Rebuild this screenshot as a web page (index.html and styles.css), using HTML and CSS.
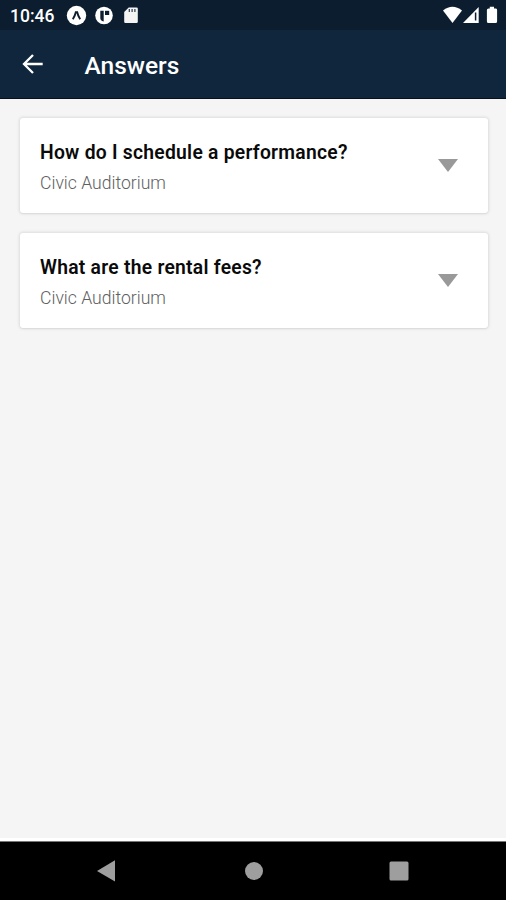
FILE: index.html
```html
<!DOCTYPE html>
<html lang="en">
<head>
<meta charset="utf-8">
<title>Answers</title>
<link rel="stylesheet" href="styles.css">
</head>
<body>
<div class="screen">
  <div class="status">
    <span class="time">10:46</span>
    <svg class="status-apps" width="66" height="30" viewBox="72 0 66 30">
      <circle cx="76.5" cy="15.5" r="9.7" fill="#fff"/>
      <path d="M72.8 19.2Q75 16 75.8 12.3h1.4Q78 16 80.2 19.2" fill="none" stroke="#0b1d2f" stroke-width="1.9"/>
      <circle cx="104" cy="15.5" r="8.8" fill="#fff"/>
      <path d="M100.3 10.8h3.4v10.6q-3.4-.8-3.4-3.5z" fill="#0b1d2f"/>
      <path d="M105 10.8h4.2v4.2H105z" fill="#0b1d2f"/>
      <path d="M128.7 7.5h7.8q1.3 0 1.3 1.3v13q0 1.3-1.3 1.3h-11q-1.3 0-1.3-1.3v-9.8z" fill="#f4f4f4"/>
      <path d="M129.3 9v3M132.1 9v3M134.9 9v3" stroke="#26384a" stroke-width="1.2"/>
    </svg>
    <svg class="status-system" width="58" height="30" viewBox="442 0 58 30">
      <path d="M443 10.5q9.5-7.5 19 0L452.5 23z" fill="#fff"/>
      <path d="M463 23 478.7 7v16z" fill="#fff"/>
      <path d="M475.6 12.5v8" stroke="#0b1d2f" stroke-width="1.5"/>
      <path d="M489.8 6.7h4.2v1.7h2q1.1 0 1.1 1.6v11.5q0 1.6-1.6 1.6h-7q-1.6 0-1.6-1.6V10q0-1.6 1.6-1.6h1.3z" fill="#fff"/>
    </svg>
  </div>
  <header class="header">
    <svg class="back" width="22" height="22" viewBox="0 0 22 22">
      <path d="M20.7 11H2.5M11 2 2 11l9 9" fill="none" stroke="#fff" stroke-width="2.3"/>
    </svg>
    <h1 class="title">Answers</h1>
  </header>
  <main class="list">
    <article class="card">
      <div>
        <h2 class="question">How do I schedule a performance?</h2>
        <p class="place">Civic Auditorium</p>
      </div>
      <svg class="caret" width="20" height="13" viewBox="0 0 20 13"><path d="M0 0h20L10 13z" fill="#999"/></svg>
    </article>
    <article class="card">
      <div>
        <h2 class="question">What are the rental fees?</h2>
        <p class="place">Civic Auditorium</p>
      </div>
      <svg class="caret" width="20" height="13" viewBox="0 0 20 13"><path d="M0 0h20L10 13z" fill="#999"/></svg>
    </article>
  </main>
  <nav class="navbar">
    <svg width="18" height="22" viewBox="0 0 18 22"><path d="M0 11 18 .3v21.2z" fill="#9e9e9e"/></svg>
    <svg class="home" width="18" height="18" viewBox="0 0 18 18"><circle cx="9" cy="9" r="9" fill="#9e9e9e"/></svg>
    <svg width="20" height="20" viewBox="0 0 20 20"><rect x=".5" y=".5" width="19" height="19" rx="1.5" fill="#9e9e9e"/></svg>
  </nav>
</div>
</body>
</html>
```
FILE: styles.css
```css
* { box-sizing: border-box; }
body { margin: 0; font-family: Roboto, sans-serif; }
h1, h2, p { margin: 0; }
svg { display: block; flex: none; }

.screen {
  display: flex;
  flex-direction: column;
  height: 900px;
  background: #f5f5f5;
}
.status {
  display: flex;
  height: 30px;
  padding: 0 4px 0 10px;
  background: #0b1d2f;
  color: #fff;
}
.time {
  width: 57px;
  font-size: 17.5px;
  font-weight: 500;
  line-height: 32px;
}
.status-apps { overflow: visible; margin-left: 5px; }
.status-system { margin-left: auto; margin-right: 2px; }

.header {
  display: flex;
  align-items: center;
  height: 69px;
  padding-left: 22px;
  background: #10263d;
  border-bottom: 1px solid #07111c;
  color: #fff;
}
.title {
  margin: 3px 0 0 40.5px;
  font-size: 24.5px;
  font-weight: 500;
  line-height: 32px;
}

.list {
  display: flex;
  flex: 1;
  flex-direction: column;
  gap: 20px;
  padding: 19px 18px 0 20px;
}
.card {
  display: flex;
  justify-content: space-between;
  height: 95px;
  padding: 22px 30px 0 20px;
  background: #fff;
  border-radius: 3px;
  box-shadow: 0 0 3px 1px rgba(0, 0, 0, 0.1), 0 1px 1px rgba(0, 0, 0, 0.04);
}
.question {
  color: #0a0a0a;
  font-size: 19.3px;
  font-weight: 600;
  letter-spacing: 0.26px;
  line-height: 26px;
}
.place {
  margin-top: 5px;
  color: #606060;
  font-size: 17.6px;
  font-weight: 300;
  line-height: 24px;
}
.caret { margin-top: 19px; }

.navbar {
  display: flex;
  align-items: center;
  justify-content: space-between;
  height: 59px;
  padding: 0 97px;
  border-top: 1px solid #777;
  box-shadow: 0 -3px 0 #fff;
  background: #000;
}
.home { margin-left: 3px; }
```
